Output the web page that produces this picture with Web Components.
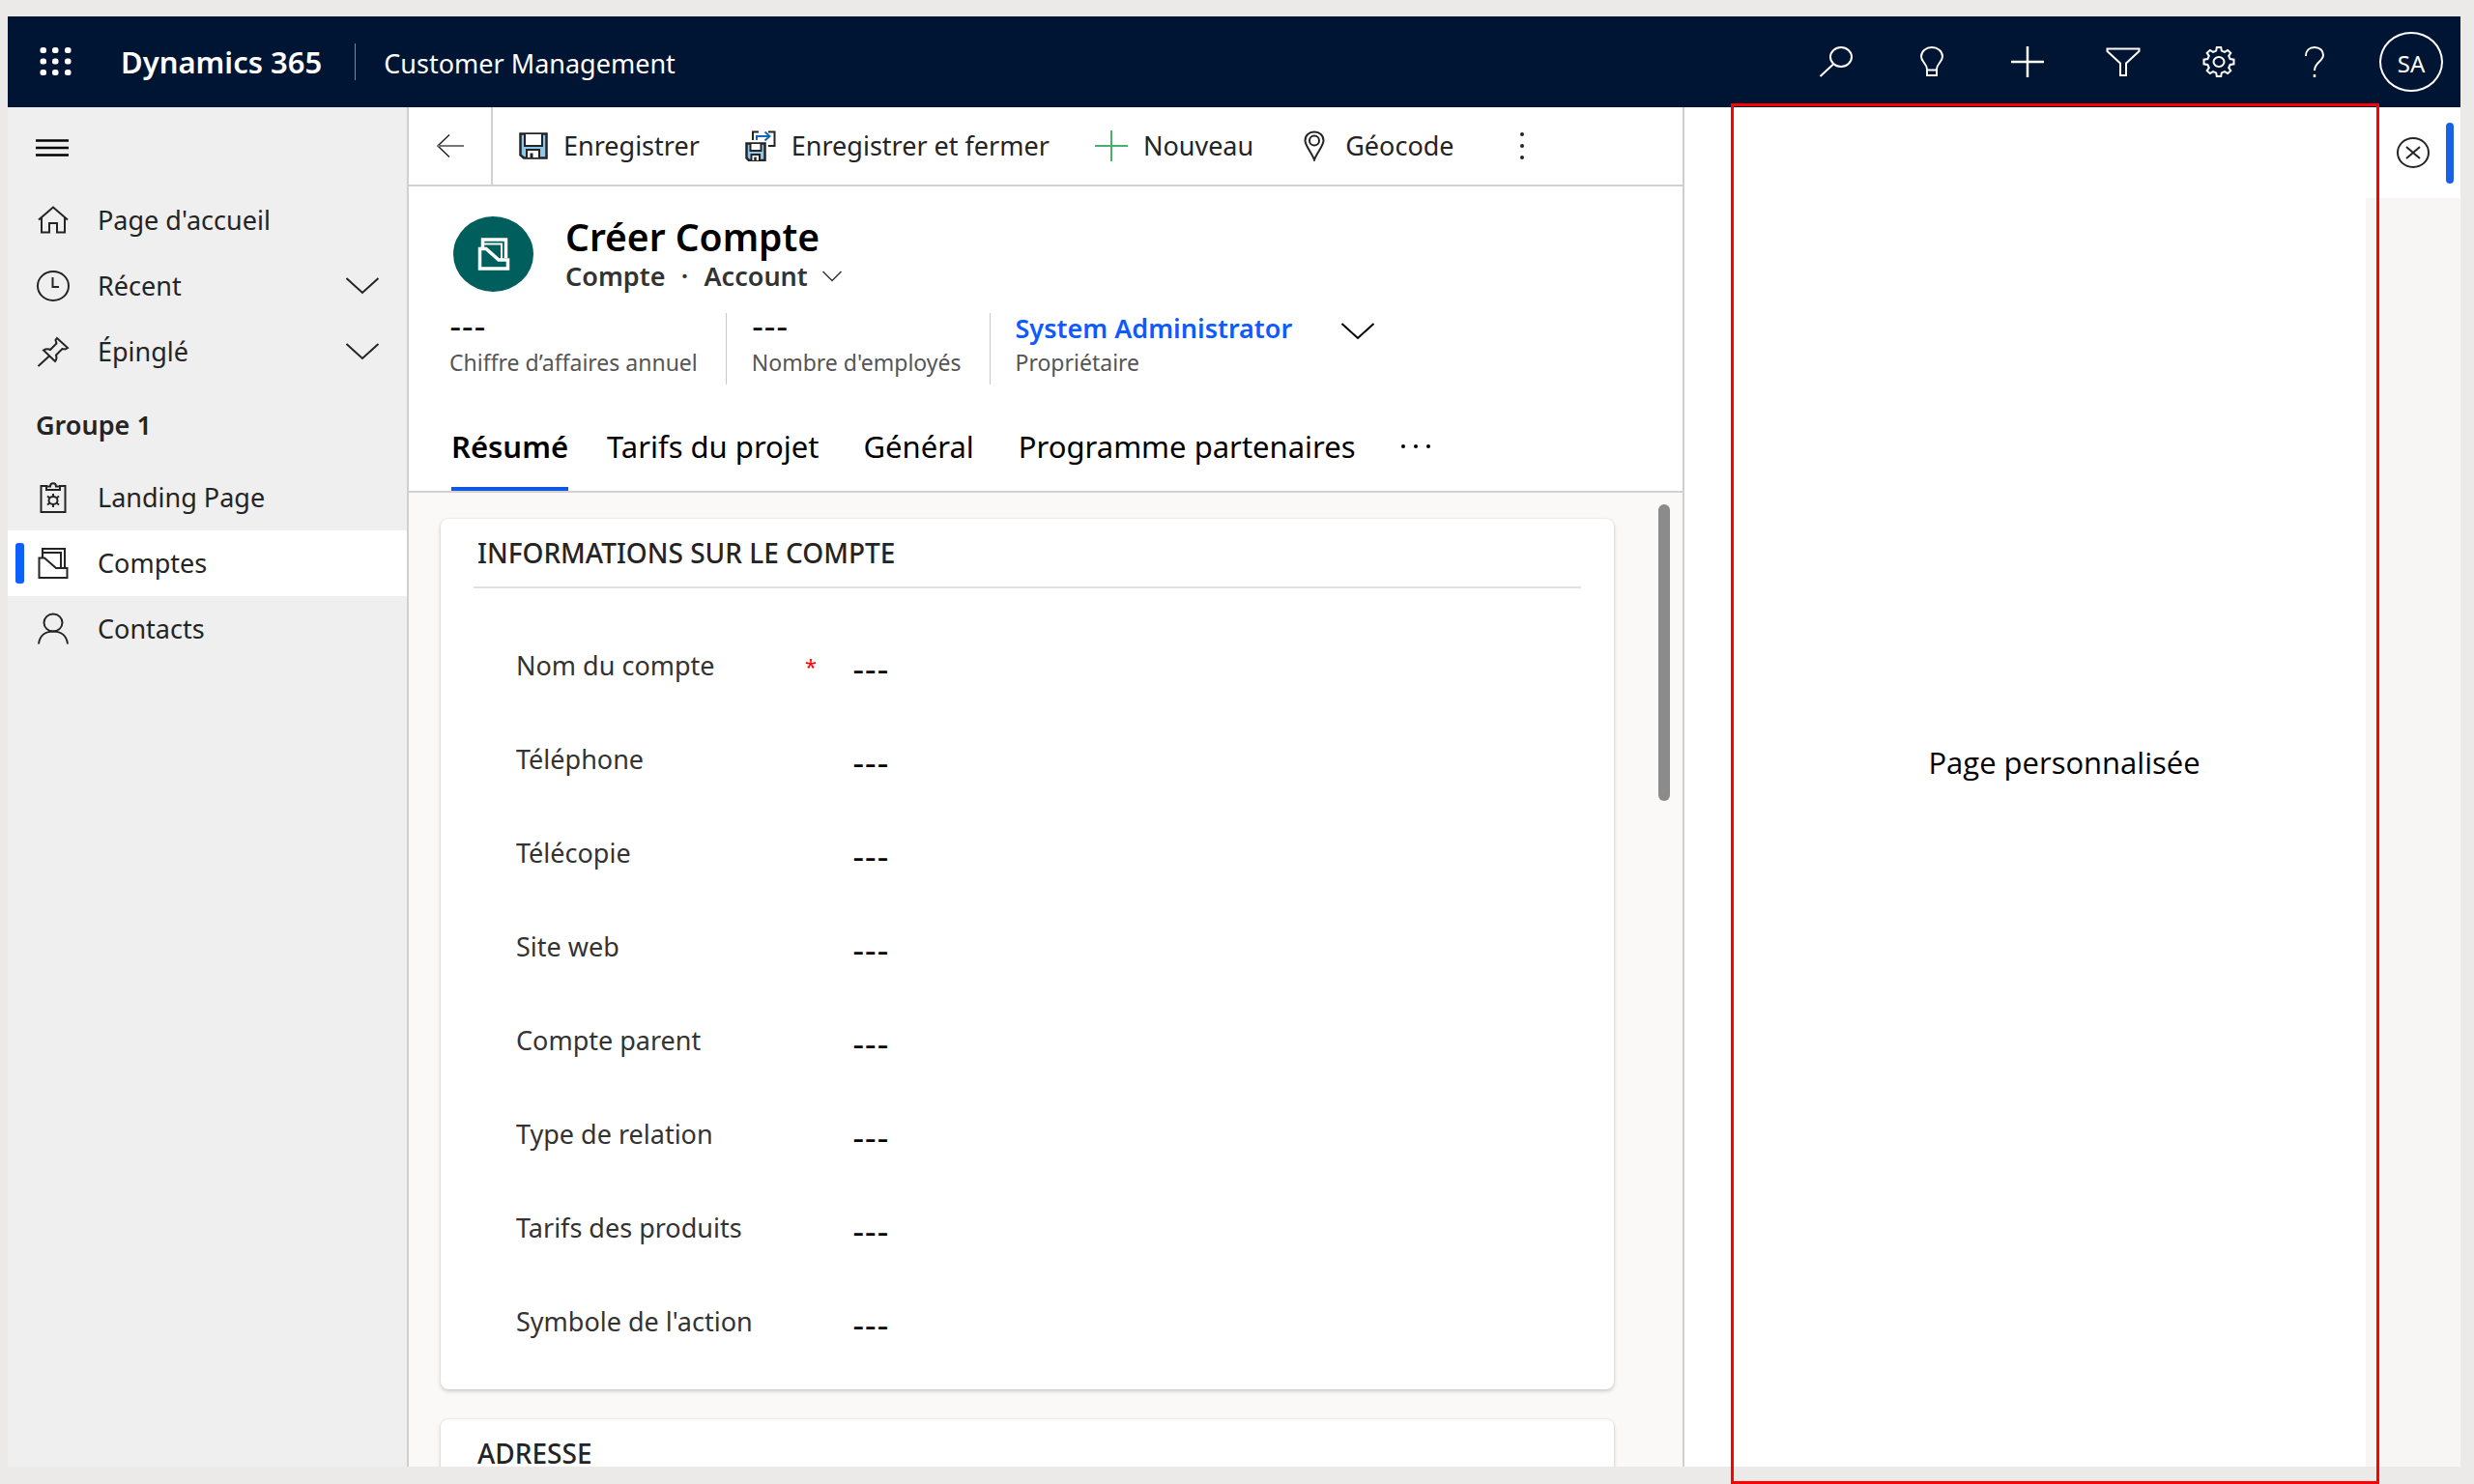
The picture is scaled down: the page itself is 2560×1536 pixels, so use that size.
<!DOCTYPE html>
<html lang="fr">
<head>
<meta charset="utf-8">
<title>Dynamics 365 - Customer Management</title>
<style>
  body { margin: 0; background: #ebeae8; color: #242424; font-family: "Noto Sans", "Open Sans", sans-serif; font-size: 27px; line-height: 36px; }
</style>
</head>
<body>
<app-shell>
  <top-bar slot="top"></top-bar>
  <side-nav slot="nav">
    <nav-item icon="home">Page d'accueil</nav-item>
    <nav-item icon="clock" expandable>Récent</nav-item>
    <nav-item icon="pin" expandable>Épinglé</nav-item>
    <nav-group>Groupe 1</nav-group>
    <nav-item icon="clipboard">Landing Page</nav-item>
    <nav-item icon="folder" active>Comptes</nav-item>
    <nav-item icon="person">Contacts</nav-item>
  </side-nav>
  <record-page>
    <command-bar slot="commands">
      <command-button icon="save">Enregistrer</command-button>
      <command-button icon="saveclose">Enregistrer et fermer</command-button>
      <command-button icon="add">Nouveau</command-button>
      <command-button icon="geo">Géocode</command-button>
    </command-bar>
    <record-header slot="header"></record-header>
    <form-card heading="INFORMATIONS SUR LE COMPTE">
      <field-row label="Nom du compte" required></field-row>
      <field-row label="Téléphone"></field-row>
      <field-row label="Télécopie"></field-row>
      <field-row label="Site web"></field-row>
      <field-row label="Compte parent"></field-row>
      <field-row label="Type de relation"></field-row>
      <field-row label="Tarifs des produits"></field-row>
      <field-row label="Symbole de l'action"></field-row>
    </form-card>
    <form-card heading="ADRESSE"></form-card>
  </record-page>
  <side-pane slot="pane">Page personnalisée</side-pane>
</app-shell>

<script>
const reset = `
  *, *::before, *::after { box-sizing: border-box; }
  button { font: inherit; color: inherit; background: none; border: 0; margin: 0; padding: 0; display: flex; align-items: center; justify-content: center; cursor: pointer; white-space: nowrap; }
  a { color: inherit; text-decoration: none; }
  h1, h2, p, ul { margin: 0; padding: 0; font: inherit; }
`;
function define(tag, css, html) {
  customElements.define(tag, class extends HTMLElement {
    connectedCallback() {
      if (this.shadowRoot) return;
      const root = this.attachShadow({ mode: "open" });
      root.innerHTML = `<style>${reset}${css}</style>` + (typeof html === "function" ? html(this) : html);
    }
  });
}

/* name: [width, height, markup] */
const icons = {
  waffle: [34, 32, `<g fill="#fff" stroke="none">${[3.5, 16, 29].map(x => [4, 15.5, 27].map(y => `<rect x="${x - 3}" y="${y - 3}" width="6.500" height="6" rx="2.5"/>`).join("")).join("")}</g>`],
  search: [36, 34, `<ellipse cx="23" cy="12" rx="11" ry="10"/><path d="M15 19.500L1.500 32"/>`],
  bulb: [26, 34, `<path d="M8 24.500C8 19 2 17 2 11.500C2 6 7 2 13 2S24 6 24 11.500C24 17 18 19 18 24.500V31H8zM8 25.500H18"/>`],
  plus: [36, 34, `<path d="M18 1V33M1 17H35" stroke-width="2.500"/>`],
  filter: [36, 32, `<path d="M1.500 2.500H34.500V5L21 17.500V30H15V17.500L1.500 5z"/>`],
  gear: [36, 34, `<path d="M15.200 5.600L15.800 2H20.200L20.800 5.600L24 6.900L27.200 4.900L30.300 7.800L28.200 10.900L29.600 14L33.500 14.700V19.300L29.600 20L28.200 23.100L30.300 26.200L27.200 29.100L24 27.100L20.800 28.400L20.200 32H15.800L15.200 28.400L12 27.100L8.800 29.100L5.700 26.200L7.800 23.100L6.400 20L2.500 19.300V14.700L6.400 14L7.800 10.900L5.700 7.800L8.800 4.900L12 6.900z"/><ellipse cx="18" cy="17" rx="5.500" ry="5"/>`],
  help: [22, 34, `<path d="M2 11C2 5.500 5.500 2 11 2S20 5.500 20 10C20 16.500 11 17.500 11 26"/><path d="M11 30V33" stroke-width="2.500"/>`],
  close: [36, 34, `<ellipse cx="18" cy="17" rx="16" ry="15"/><path d="M11 11L25 23M25 11L11 23"/>`],
  menu: [34, 20, `<path d="M0 2.500H34M0 10H34M0 17.500H34" stroke="#000" stroke-width="2.500"/>`],
  home: [34, 32, `<path d="M2 15.500L17 2.500L32 15.500M5 13V28.500H13V19H21V28.500H29V13"/>`],
  clock: [34, 32, `<ellipse cx="17" cy="16" rx="16" ry="15"/><path d="M16.500 7V17H23"/>`],
  pin: [34, 32, `<path d="M21 2L32 12L29.500 13.500L26.500 13L20 19.500C21 22 20.500 24 19 26L7 14.500C9.500 13 12 13 14 14L20.500 7.500L19.500 4zM13 20.500L1.500 31"/>`],
  clipboard: [34, 34, `<path d="M11 5H4.500V32H29.500V5H23M10 9H24V5.500H20C20 1 14 1 14 5.500H10z"/><ellipse cx="17" cy="20" rx="4.500" ry="4"/><path d="M17 13V16M17 24V27M11 15.500L13.500 17.500M20.500 22.500L23 24.500M23 15.500L20.500 17.500M13.500 22.500L11 24.500"/>`],
  folder: [34, 34, `<path d="M6 11V2H29V22M5.500 6H25V21.500M2.500 11.500H8L20 22H31.500V32H2.500z"/>`],
  badge: [34, 34, `<path d="M5.500 10V2H29.500V21M2.500 11.500H9L22 23H31.500V32H2.500z" stroke-width="3.500"/><path d="M5.500 6.500H25V22"/>`],
  person: [34, 34, `<ellipse cx="17" cy="10.500" rx="9.500" ry="9"/><path d="M2 32.500C3 24 9 19.500 17 19.500S31 24 32 32.500"/>`],
  chevron: [36, 20, `<path d="M1.500 2L18 17L34.500 2"/>`],
  chevsmall: [22, 14, `<path d="M1.500 2L11 11.500L20.500 2" stroke-width="1.500"/>`],
  back: [30, 26, `<path d="M14 1.500L2 13L14 24.500" stroke-width="1.500"/><path d="M2 13H29" stroke="#777"/>`],
  save: [30, 28, `<path d="M1.500 1.500H28.500V26.500H5L1.500 23.500z" fill="#8fc8ee" stroke-width="2.500"/><path d="M6 2V14H24V2" fill="#fff"/><path d="M8 26V18H21V26" fill="#fff"/><path d="M13 26V21.500" stroke-width="3"/>`],
  saveclose: [32, 32, `<path d="M8 10V1.500H14M24 1.500H30.500V16H24"/><path d="M12 10V6H25M20.500 1.500L25.500 6L20.500 10.500" stroke="#1566b7"/><path d="M1.500 13.500H20.500V31H4L1.500 28.500z" fill="#8fc8ee" stroke-width="2.500"/><path d="M5.500 14V21H16.500V14M6.500 31V25H15V31" fill="#fff"/><path d="M10.500 31V27.500" stroke-width="2.500"/>`],
  add: [34, 32, `<path d="M17 0V32M0 16H34" stroke="#45b36b"/>`],
  geo: [32, 32, `<path d="M16 30.500C13.500 23 6.500 16 6.500 10.500C6.500 5 10.500 1.500 16 1.500S25.500 5 25.500 10.500C25.500 16 18.500 23 16 30.500z"/><ellipse cx="16" cy="10.500" rx="5" ry="5"/>`],
  vdots: [6, 30, `<g fill="currentColor" stroke="none"><circle cx="3" cy="3" r="2"/><circle cx="3" cy="15" r="2"/><circle cx="3" cy="27" r="2"/></g>`],
  hdots: [32, 6, `<g fill="currentColor" stroke="none"><circle cx="3" cy="3" r="2"/><circle cx="16" cy="3" r="2"/><circle cx="29" cy="3" r="2"/></g>`]
};
define("ui-icon", `:host { display: block; flex: none; } svg { display: block; }`, el => {
  const [w, h, body] = icons[el.getAttribute("name")];
  return `<svg width="${w}" height="${h}" viewBox="0 0 ${w} ${h}" fill="none" stroke="currentColor" stroke-width="2" aria-hidden="true">${body}</svg>`;
});

define("app-shell", `
  :host { display: flex; flex-direction: column; height: 100vh; box-sizing: border-box; padding: 17px 14px 18px 8px; overflow: hidden; }
  .body { flex: 1; min-height: 0; display: grid; grid-template-columns: 415px minmax(0, 1fr) 803px; background: #fff; }
`, `<slot name="top"></slot><div class="body"><slot name="nav"></slot><slot></slot><slot name="pane"></slot></div>`);

define("top-bar", `
  :host { display: block; background: #001433; color: #fff; }
  header { height: 94px; display: flex; align-items: center; padding: 0 18px 0 33px; }
  .brand { font-size: 31px; line-height: 38px; font-weight: 600; margin-left: 50px; padding-right: 34px; border-right: 1px solid #7c8698; }
  .app { margin-left: 29px; padding-top: 3px; }
  nav { margin-left: auto; display: flex; align-items: center; }
  nav button { width: 99px; height: 62px; }
  nav .avatar { width: 66px; border: 2px solid #fff; border-radius: 50%; font-size: 24px; margin-left: 18px; padding-top: 4px; }
`, `<header>
  <button aria-label="Lanceur d'applications"><ui-icon name="waffle"></ui-icon></button>
  <a class="brand" href="#">Dynamics 365</a>
  <a class="app" href="#">Customer Management</a>
  <nav>
    <button aria-label="Rechercher"><ui-icon name="search"></ui-icon></button>
    <button aria-label="Idées"><ui-icon name="bulb"></ui-icon></button>
    <button aria-label="Ajouter"><ui-icon name="plus"></ui-icon></button>
    <button aria-label="Filtrer"><ui-icon name="filter"></ui-icon></button>
    <button aria-label="Paramètres"><ui-icon name="gear"></ui-icon></button>
    <button aria-label="Aide"><ui-icon name="help"></ui-icon></button>
    <button class="avatar">SA</button>
  </nav></header>`);

define("side-nav", `
  :host { display: block; background: #efefef; border-right: 2px solid #cfcfcf; box-sizing: border-box; }
  .toggle { height: 83px; padding: 0 29px; }
`, `<button class="toggle" aria-label="Menu"><ui-icon name="menu"></ui-icon></button><nav><slot></slot></nav>`);

define("nav-item", `
  :host { display: block; }
  :host([active]) { background: #fff; }
  a { display: flex; align-items: center; height: 68px; padding: 0 28px 0 8px; }
  .mark { width: 9px; height: 42px; border-radius: 3px; margin-right: 13px; }
  :host([active]) .mark { background: #0b60ff; }
  .text { flex: 1; margin-left: 29px; }
`, el => `<a href="#"><span class="mark"></span><ui-icon name="${el.getAttribute("icon")}"></ui-icon><span class="text"><slot></slot></span>${el.hasAttribute("expandable") ? `<ui-icon name="chevron"></ui-icon>` : ""}</a>`);

define("nav-group", `:host { display: block; height: 83px; padding: 24px 29px; box-sizing: border-box; font-weight: 600; }`, `<slot></slot>`);

define("record-page", `
  :host { display: flex; flex-direction: column; min-width: 0; min-height: 0; border-right: 2px solid #cfcfcf; box-sizing: border-box; background: #fff; }
  .scroll { flex: 1; min-height: 0; overflow: hidden; display: flex; justify-content: space-between; background: #faf9f8; border-top: 2px solid #d2d2d2; padding: 0 13px 0 33px; }
  .cards { flex: 1; margin-right: 46px; padding-top: 27px; display: flex; flex-direction: column; gap: 31px; }
  .thumb { width: 12px; height: 307px; margin-top: 12px; border-radius: 6px; background: #8b8b8b; }
`, `<slot name="commands"></slot><slot name="header"></slot><div class="scroll"><div class="cards"><slot></slot></div><div class="thumb"></div></div>`);

define("command-bar", `
  :host { display: flex; align-items: center; height: 82px; border-bottom: 2px solid #d2d2d2; box-sizing: border-box; }
  .back { width: 87px; align-self: stretch; border-right: 2px solid #d2d2d2; }
  .items { display: flex; gap: 47px; margin-left: 27px; }
  .more { width: 30px; height: 60px; margin-left: 55px; }
`, `<button class="back" aria-label="Retour"><ui-icon name="back"></ui-icon></button><div class="items"><slot></slot></div><button class="more" aria-label="Plus de commandes"><ui-icon name="vdots"></ui-icon></button>`);

define("command-button", `
  :host { display: block; }
  button { gap: 16px; height: 60px; }
`, el => `<button><ui-icon name="${el.getAttribute("icon")}"></ui-icon><span><slot></slot></span></button>`);

define("record-header", `
  :host { display: block; padding: 31px 42px 0; color: #000; }
  .title { display: flex; gap: 33px; padding-left: 4px; }
  .badge { width: 83px; height: 78px; border-radius: 50%; background: #005e5d; color: #fff; display: flex; align-items: center; justify-content: center; }
  h1 { font-size: 39px; line-height: 42px; font-weight: 600; }
  .sub { display: flex; align-items: center; font-weight: 600; color: #333; line-height: 40px; }
  .sub button { gap: 14px; }
  .sub i { font-style: normal; width: 40px; text-align: center; }
  .stats { display: flex; margin-top: 18px; height: 74px; }
  .stat { border-right: 1px solid #c8c8c8; padding-right: 29px; margin-right: 26px; }
  .stat:last-child { border: 0; display: flex; gap: 50px; }
  .stat b, .stat a { display: block; font-weight: 600; line-height: 32px; }
  .stat b { font-family: Inter, sans-serif; }
  .stat a { color: #0d5bff; }
  .stat span { font-size: 23px; line-height: 38px; color: #555; }
  .stat ui-icon { margin-top: 9px; }
  .tabs { display: flex; align-items: center; height: 86px; margin-top: 24px; padding-left: 2px; font-size: 31px; }
  .tabs button { height: 86px; margin-right: 46px; padding-bottom: 2px; border-bottom: 4px solid transparent; }
  .tabs button[aria-selected=true] { font-weight: 600; border-color: #0f58e0; margin-right: 40px; }
`, `<div class="title"><div class="badge"><ui-icon name="badge"></ui-icon></div>
  <div><h1>Créer Compte</h1><div class="sub"><span>Compte</span><i>·</i><button>Account<ui-icon name="chevsmall"></ui-icon></button></div></div></div>
  <div class="stats">
    <div class="stat"><b>---</b><span>Chiffre d’affaires annuel</span></div>
    <div class="stat"><b>---</b><span>Nombre d'employés</span></div>
    <div class="stat"><div><a href="#">System Administrator</a><span>Propriétaire</span></div><ui-icon name="chevron"></ui-icon></div>
  </div>
  <div class="tabs" role="tablist">
    <button role="tab" aria-selected="true">Résumé</button><button role="tab">Tarifs du projet</button><button role="tab">Général</button><button role="tab">Programme partenaires</button><button aria-label="Plus d'onglets"><ui-icon name="hdots"></ui-icon></button>
  </div>`);

define("form-card", `
  :host { display: block; background: #fff; border-radius: 8px; box-shadow: 0 2px 4px rgba(0,0,0,.18), 0 0 2px rgba(0,0,0,.1); padding: 0 34px 22px; }
  h2 { height: 72px; padding: 17px 4px 0; font-size: 28px; font-weight: 500; border-bottom: 2px solid #e3e2e1; }
  .rows { padding: 31px 44px 0; }
`, el => `<h2>${el.getAttribute("heading")}</h2><div class="rows"><slot></slot></div>`);

let rowCount = 0;
define("field-row", `
  :host { display: grid; grid-template-columns: 299px 11px minmax(0, 1fr); align-items: center; height: 97px; color: #333; }
  .req { color: #f00; font-size: 22px; }
  input { font: inherit; font-family: Inter, sans-serif; font-weight: 600; color: #000; border: 0; background: none; width: 100%; padding: 0; margin: 12px 0 0 38px; outline: 0; }
`, el => {
  const id = "field-" + (++rowCount);
  return `<label for="${id}">${el.getAttribute("label")}</label><span class="req">${el.hasAttribute("required") ? "*" : ""}</span><input id="${id}" value="---">`;
});

define("side-pane", `
  :host { display: grid; grid-template-columns: minmax(0, 1fr) 98px; position: relative; background: #fff; }
  .rail { grid-column: 2; background: #f7f6f5; }
  .tab { height: 94px; background: #fff; display: grid; grid-template-columns: 1fr 36px 1fr; align-items: center; }
  .tab button { grid-column: 2; }
  .bar { width: 8px; height: 63px; margin-right: 7px; justify-self: end; border-radius: 4px; background: #1760e8; }
  .frame { position: absolute; inset: -4px 84px -18px 48px; border: 3px solid #f00; display: flex; align-items: center; justify-content: center; padding: 0 0 66px 19px; font-family: "Open Sans", sans-serif; font-size: 31px; color: #000; pointer-events: none; }
`, `<div class="rail"><div class="tab"><button aria-label="Fermer"><ui-icon name="close"></ui-icon></button><span class="bar"></span></div></div><div class="frame"><p><slot></slot></p></div>`);
</script>
</body>
</html>
